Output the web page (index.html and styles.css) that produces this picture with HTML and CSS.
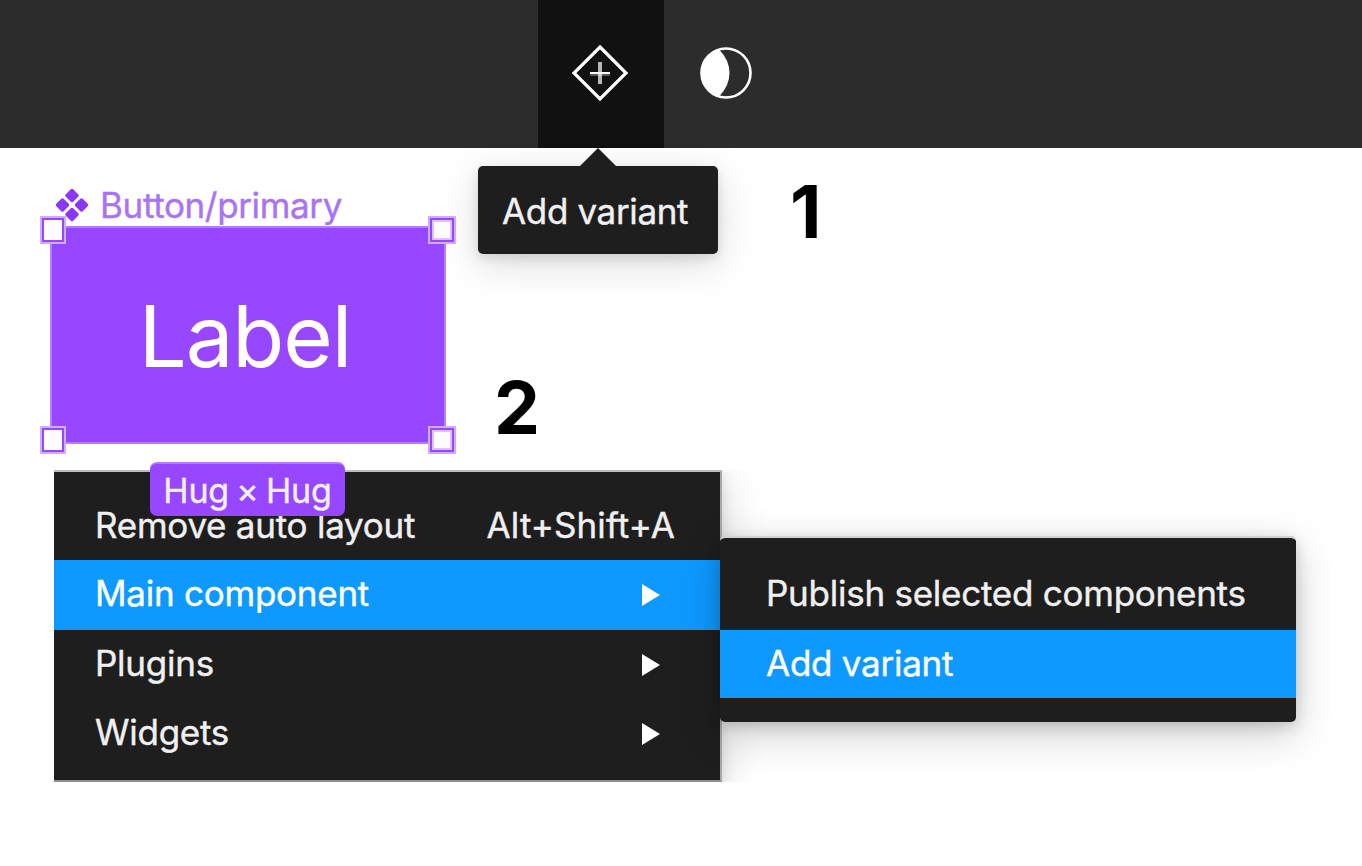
FILE: index.html
```
<!DOCTYPE html>
<html lang="en">
<head>
  <meta charset="UTF-8">
  <title>Add variant</title>
  <link rel="stylesheet" href="styles.css">
</head>
<body>
<div class="toolbar">
  <div class="tool active">
    <svg width="60" height="60" viewBox="0 0 60 60" fill="none" stroke="#fff">
      <path d="M30 4 56 30 30 56 4 30Z" stroke-width="3.2"/>
      <path d="M20 30H40" stroke-width="2"/>
      <path d="M20 32H40" stroke-width="2" stroke-opacity="0.3"/>
      <path d="M30 19V41" stroke-width="4" stroke-opacity="0.7"/>
    </svg>
    <div class="tooltip">Add variant</div>
  </div>
  <div class="tool">
    <svg width="60" height="60" viewBox="0 0 60 60">
      <circle cx="30" cy="30" r="24.5" fill="none" stroke="#fff" stroke-width="2.6"/>
      <path d="M23 6.500A24.520 24.520 0 0 0 23 53.500Q33.500 43 33.500 30T23 6.500Z" fill="#fff"/>
    </svg>
  </div>
</div>

<div class="canvas">
  <div class="step one">1</div>
  <div class="step two">2</div>

  <div class="component">
    <div class="name">
      <svg width="34" height="34" viewBox="0 0 34 34" fill="#8a38f5" stroke="#8a38f5" stroke-width="3.4" stroke-linejoin="round">
        <path d="M17 2.500 22 7.500 17 12.500 12 7.500ZM17 21.500 22 26.500 17 31.500 12 26.500ZM7.500 12 12.500 17 7.500 22 2.500 17ZM26.500 12 31.500 17 26.500 22 21.500 17Z"/>
      </svg>
      <span>Button/primary</span>
    </div>
    <div class="frame">
      <span class="label">Label</span>
      <i class="handle tl"></i>
      <i class="handle tr"></i>
      <i class="handle bl"></i>
      <i class="handle br"></i>
    </div>
    <div class="size">Hug × Hug</div>
  </div>

  <div class="menus">
    <ul class="menu">
      <li><span>Remove auto layout</span><span class="key">Alt+Shift+A</span></li>
      <li class="current"><span>Main component</span><b class="arrow"></b></li>
      <li><span>Plugins</span><b class="arrow"></b></li>
      <li><span>Widgets</span><b class="arrow"></b></li>
    </ul>
    <ul class="submenu">
      <li><span>Publish selected components</span></li>
      <li class="current"><span>Add variant</span></li>
    </ul>
  </div>
</div>
</body>
</html>
```
FILE: styles.css
```
* {
  padding: 0;
  margin: 0;
  list-style: none;
  box-sizing: border-box;
}

body {
  width: 1362px;
  height: 866px;
  overflow: hidden;
  background: #fff;
  font-family: Inter, "Liberation Sans", sans-serif;
  font-size: 35px;
  letter-spacing: -0.35px;
  color: #f0f0f0;
  white-space: nowrap;
}

.toolbar {
  display: flex;
  height: 148px;
  padding-left: 538px;
  background: #2c2c2c;
}

.tool {
  width: 126px;
  padding: 43px 0 0 32px;
  position: relative;
}

.tool.active {
  background: #111;
}

.tool svg {
  display: block;
}

.tooltip {
  position: absolute;
  z-index: 2;
  left: -60px;
  top: 166px;
  width: 240px;
  height: 88px;
  padding-left: 24px;
  line-height: 91px;
  background: #1e1e1e;
  border-radius: 5px;
  box-shadow: 0 10px 40px rgba(0, 0, 0, 0.14), 0 4px 12px rgba(0, 0, 0, 0.12);
}

.tooltip::before {
  content: "";
  position: absolute;
  left: 102px;
  top: -18px;
  border: 18px solid transparent;
  border-top: 0;
  border-bottom-color: #1e1e1e;
}

.tooltip,
.name,
.size,
.menus {
  -webkit-text-stroke: 0.4px;
}

.canvas {
  position: relative;
  height: 718px;
  padding: 322px 0 0 54px;
}

.step {
  position: absolute;
  font-size: 73px;
  font-weight: 700;
  line-height: 73px;
  letter-spacing: 0;
  color: #000;
}

.step.one {
  left: 790px;
  top: 27px;
}

.step.two {
  left: 494px;
  top: 223px;
}

.component {
  position: absolute;
  z-index: 3;
  left: 50px;
  top: 36px;
  width: 396px;
}

.name {
  display: flex;
  align-items: center;
  height: 42px;
  padding-left: 5px;
  gap: 11px;
  color: #a873f5;
}

.frame {
  position: relative;
  display: flex;
  align-items: center;
  justify-content: center;
  height: 218px;
  background: #9747ff;
  border: 2px solid #b47cff;
}

.label {
  padding: 3px 6px 0 0;
  font-size: 85px;
  line-height: 100px;
  letter-spacing: -1.1px;
  color: #fff;
}

.handle {
  position: absolute;
  width: 26px;
  height: 28px;
  background: #fcfcfc;
  border: 2px solid #d0acff;
  box-shadow: inset 0 0 0 2px #9747ff;
}

.tl {
  left: -12px;
  top: -12px;
}

.tr {
  right: -12px;
  top: -12px;
}

.bl {
  left: -12px;
  bottom: -12px;
}

.br {
  right: -12px;
  bottom: -12px;
}

.tr,
.br {
  width: 28px;
  box-shadow: inset 0 0 0 2px #9747ff, inset 0 0 0 4px #dcc2ff;
}

.size {
  width: 195px;
  height: 54px;
  margin: 18px 0 0 100px;
  font-size: 34px;
  line-height: 54px;
  letter-spacing: -0.2px;
  word-spacing: -2px;
  text-align: center;
  background: #9747ff;
  border-top: 2px solid #b47cff;
  border-radius: 7px;
}

/* clips the menu shadows */
.menus {
  display: flex;
  align-items: flex-start;
  width: 1276px;
  height: 312px;
  overflow: hidden;
  letter-spacing: -0.25px;
}

.menu {
  width: 668px;
  height: 312px;
  padding-top: 18px;
  background: #1e1e1e;
  background-clip: padding-box;
  border: 2px solid #bcbcbc;
  border-left: 0;
  border-right-color: #a8a8a8;
  border-bottom-color: #8e8e8e;
  box-shadow: 0 10px 40px rgba(0, 0, 0, 0.18), 0 4px 12px rgba(0, 0, 0, 0.1);
}

.menus li {
  display: flex;
  justify-content: space-between;
  align-items: center;
  height: 69px;
  padding: 0 60px 0 41px;
}

.menus li span {
  padding-bottom: 3px;
}

.menu li:first-child,
.menu li.current {
  height: 70px;
}

.menu li:first-child {
  padding-right: 45px;
}

.menu li:first-child span {
  padding-bottom: 0;
}

.menu li.current span,
.menus .submenu li span {
  padding-bottom: 4px;
}

.menu li .key {
  letter-spacing: 0.1px;
}

.menus li.current {
  background: #0d99ff;
  color: #fff;
}

.arrow {
  border: 11px solid transparent;
  border-left: 18px solid #fff;
  border-right: 0;
}

.submenu {
  position: relative;
  width: 576px;
  height: 186px;
  margin: 66px 0 0 -2px;
  padding-top: 22px;
  background: #1e1e1e;
  border-top: 2px solid #d2d2d2;
  background-clip: padding-box;
  border-radius: 5px;
  box-shadow: 0 12px 42px rgba(0, 0, 0, 0.2), 0 4px 14px rgba(0, 0, 0, 0.16);
}

.menus .submenu li {
  height: 70px;
  padding-left: 46px;
}

.menus .submenu li.current {
  height: 68px;
}

.menus .submenu li.current span {
  padding-bottom: 2px;
}
```
